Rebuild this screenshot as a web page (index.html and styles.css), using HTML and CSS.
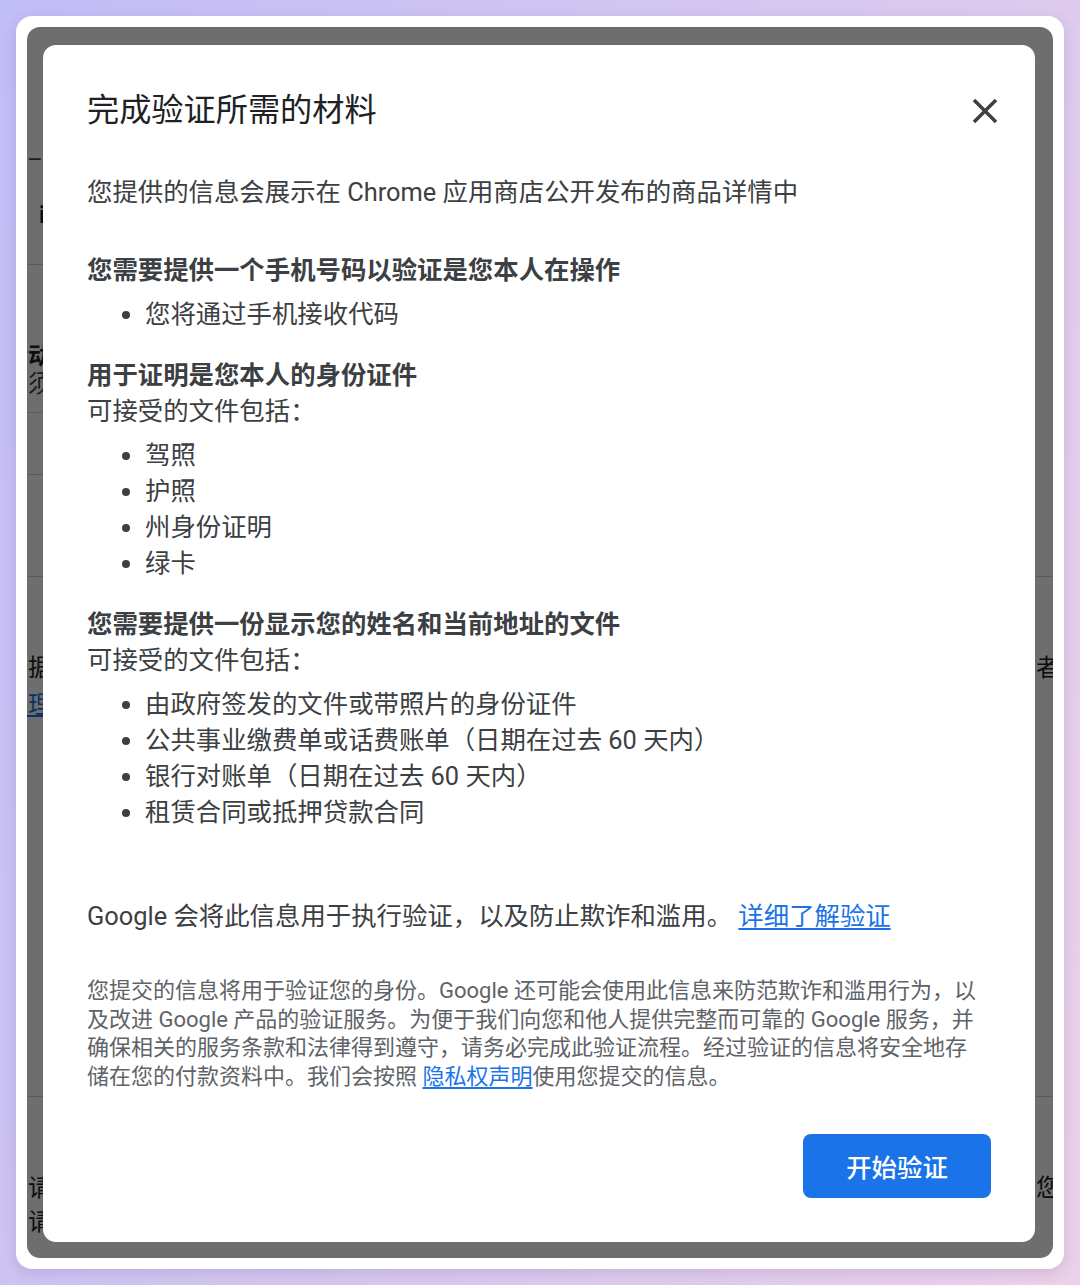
FILE: index.html
```html
<!DOCTYPE html>
<html lang="zh-CN">
<head>
<meta charset="utf-8">
<title>完成验证所需的材料</title>
<link rel="stylesheet" href="styles.css">
</head>
<body>
<div class="frame">
  <div class="screen">
    <div class="page">
      <div class="side">
        <div class="row row-a">
          <div class="frag frag-a1">– 么</div>
          <div class="frag frag-a2">i</div>
        </div>
        <div class="row row-b">
          <div class="frag frag-b1 strong">活动</div>
          <div class="frag frag-b2">必须</div>
        </div>
        <div class="row row-c"></div>
      </div>
      <div class="row row-d"></div>
      <div class="row row-e">
        <div class="split">
          <div class="frag frag-e1">根据</div>
          <div class="frag frag-right">作者</div>
        </div>
        <div class="frag frag-e2"><span class="plink">管理</span></div>
      </div>
      <div class="row row-f">
        <div class="split">
          <div class="frag frag-f1">申请</div>
          <div class="frag frag-right">您</div>
        </div>
        <div class="frag frag-f2">申请</div>
      </div>
    </div>

    <div class="overlay">
      <div class="dialog" role="dialog" aria-labelledby="dlg-title">
        <div class="dialog-header">
          <h1 id="dlg-title" class="dialog-title">完成验证所需的材料</h1>
          <button class="close-btn" aria-label="关闭">
            <svg viewBox="0 0 24 24" width="42" height="42" aria-hidden="true">
              <path d="M19 6.41L17.59 5 12 10.59 6.41 5 5 6.41 10.59 12 5 17.59 6.41 19 12 13.41 17.59 19 19 17.59 13.41 12z" fill="currentColor"/>
            </svg>
          </button>
        </div>

        <p class="lead">您提供的信息会展示在 Chrome 应用商店公开发布的商品详情中</p>

        <section class="req req-first">
          <h2 class="req-title">您需要提供一个手机号码以验证是您本人在操作</h2>
          <ul class="req-list">
            <li>您将通过手机接收代码</li>
          </ul>
        </section>

        <section class="req">
          <h2 class="req-title">用于证明是您本人的身份证件</h2>
          <p class="req-note">可接受的文件包括：</p>
          <ul class="req-list">
            <li>驾照</li>
            <li>护照</li>
            <li>州身份证明</li>
            <li>绿卡</li>
          </ul>
        </section>

        <section class="req">
          <h2 class="req-title">您需要提供一份显示您的姓名和当前地址的文件</h2>
          <p class="req-note">可接受的文件包括：</p>
          <ul class="req-list">
            <li>由政府签发的文件或带照片的身份证件</li>
            <li>公共事业缴费单或话费账单（日期在过去 60 天内）</li>
            <li>银行对账单（日期在过去 60 天内）</li>
            <li>租赁合同或抵押贷款合同</li>
          </ul>
        </section>

        <p class="usage">Google 会将此信息用于执行验证，以及防止欺诈和滥用。 <a href="#" class="link">详细了解验证</a></p>

        <p class="fineprint">您提交的信息将用于验证您的身份。Google 还可能会使用此信息来防范欺诈和滥用行为，以及改进 Google 产品的验证服务。为便于我们向您和他人提供完整而可靠的 Google 服务，并确保相关的服务条款和法律得到遵守，请务必完成此验证流程。经过验证的信息将安全地存储在您的付款资料中。我们会按照 <a href="#" class="link">隐私权声明</a>使用您提交的信息。</p>

        <div class="actions">
          <button class="primary-btn">开始验证</button>
        </div>
      </div>
    </div>
  </div>
</div>
</body>
</html>
```

FILE: styles.css
```css
* { box-sizing: border-box; }

html, body {
  margin: 0;
  padding: 0;
}

body {
  width: 1080px;
  height: 1285px;
  overflow: hidden;
  background: linear-gradient(110deg, #c1bdf6 0%, #d3c6f1 45%, #ecd1e9 100%);
  font-family: Roboto, "Noto Sans CJK SC", sans-serif;
}

.frame {
  margin: 16px;
  width: 1048px;
  height: 1253px;
  padding: 11px;
  background: #ffffff;
  border-radius: 16px;
  box-shadow: 0 4px 14px rgba(90, 70, 140, 0.18);
}

.screen {
  position: relative;
  width: 1026px;
  height: 1231px;
  border-radius: 13px;
  overflow: hidden;
  background: #ffffff;
}

/* underlying page (mostly hidden behind the dialog) */
.page {
  display: flex;
  flex-direction: column;
  height: 100%;
  color: #202124;
  font-size: 24px;
  line-height: 30px;
}

.side { width: 320px; }

.row { border-bottom: 1px solid #cfcfcf; }
.row-a { height: 238px; padding-top: 118px; }
.row-b { height: 148px; padding-top: 76px; }
.row-c { height: 62px; }
.row-d { height: 102px; }
.row-e { height: 520px; padding-top: 76px; }
.row-f { flex: 1; border-bottom: none; padding-top: 76px; }

.frag { white-space: nowrap; }
.strong { font-weight: 700; }

.frag-a1 { margin-left: 0; color: #444; }
.frag-a2 { margin-left: 12px; margin-top: 25px; font-weight: 700; }
.frag-b1 { margin-left: -23px; }
.frag-b2 { margin-left: -23px; margin-top: -2px; color: #3c4043; }
.frag-e1 { margin-left: -23px; }
.frag-e2 { margin-left: -23px; margin-top: 7px; }
.frag-f1 { margin-left: -23px; }
.frag-f2 { margin-left: -23px; margin-top: 4px; }

.split {
  display: flex;
  justify-content: space-between;
}
.frag-right { margin-right: -7px; }

.plink { color: #1a73e8; text-decoration: underline; }

/* overlay + dialog */
.overlay {
  position: absolute;
  inset: 0;
  background: rgba(0, 0, 0, 0.57);
  display: flex;
  align-items: flex-start;
  padding: 18px 18px 0 16px;
}

.dialog {
  width: 992px;
  height: 1197px;
  background: #ffffff;
  border-radius: 13px;
  padding: 44px 44px 44px 44px;
  color: #3c4043;
  font-size: 25.4px;
  line-height: 36px;
  display: flex;
  flex-direction: column;
}

.dialog-header {
  display: flex;
  justify-content: space-between;
  align-items: center;
  height: 43px;
}

.dialog-title {
  margin: 0;
  font-size: 32.2px;
  line-height: 43px;
  font-weight: 400;
  color: #202124;
}

.close-btn {
  border: 0;
  background: transparent;
  padding: 0;
  width: 42px;
  height: 42px;
  margin-right: -15px;
  color: #3c4043;
  display: flex;
  align-items: center;
  justify-content: center;
  cursor: pointer;
}
.close-btn svg { display: block; }

.lead {
  margin: 42px 0 0;
}

.req { margin-top: 25px; }
.req-first { margin-top: 42px; }

.req-title {
  margin: 0;
  font-size: 25.4px;
  line-height: 36px;
  font-weight: 700;
  color: #3c4043;
}

.req-note { margin: 0; }

.req-list {
  margin: 8px 0 0;
  padding-left: 58px;
}
.req-list li { line-height: 36px; }

.usage {
  margin: 68px 0 0;
  color: #3c4043;
}

.link {
  color: #1a73e8;
  text-decoration: underline;
  text-underline-offset: 3px;
}

.fineprint {
  margin: 43px 0 0;
  max-width: 898px;
  font-size: 22px;
  line-height: 28.7px;
  color: #5f6368;
}

.actions {
  margin-top: auto;
  display: flex;
  justify-content: flex-end;
}

.primary-btn {
  width: 188px;
  height: 64px;
  border: 0;
  border-radius: 8px;
  background: #1a73e8;
  color: #ffffff;
  font-family: Roboto, "Noto Sans CJK SC", sans-serif;
  font-size: 25.4px;
  font-weight: 500;
  cursor: pointer;
}
```
